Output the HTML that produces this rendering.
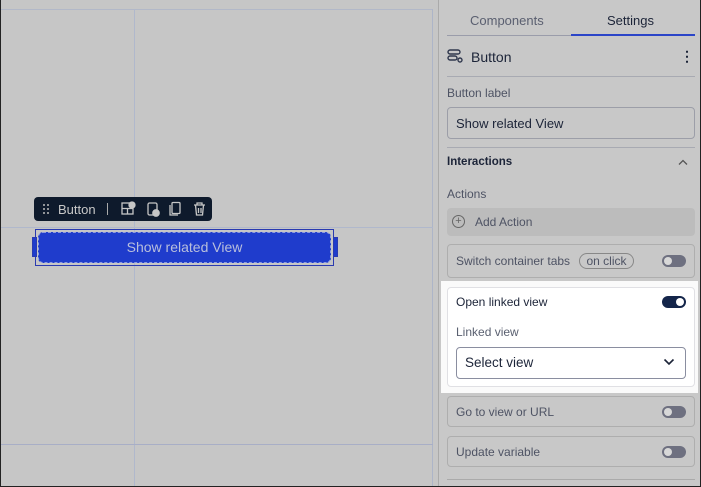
<!DOCTYPE html>
<html><head><style>
*{box-sizing:border-box;margin:0;padding:0}
body{width:701px;height:487px;overflow:hidden;background:#c6c6c6;font-family:"Liberation Sans",sans-serif;position:relative}
.abs{position:absolute}
.frame{left:0;top:0;width:701px;height:487px;border:1px solid #222;border-top:none;pointer-events:none}
.panel{left:438px;top:0;width:263px;height:487px;background:#c8c8c8;border-left:1px solid #aaa}
.t{position:absolute;color:#3a3f52;white-space:nowrap}
.tog{position:absolute;width:24px;height:12px;border-radius:6px;background:#6e7080}
.tog::after{content:"";position:absolute;left:2px;top:2px;width:8px;height:8px;border-radius:50%;background:#d8d8d8}
.box{position:absolute;left:447px;width:248px;border:1px solid #aeaeae;border-radius:4px}
</style></head><body>
<div class="abs" style="left:0;top:9px;width:433px;height:1px;background:#b2b8c8"></div>
<div class="abs" style="left:432px;top:9px;width:1px;height:478px;background:#adb5c8"></div>
<div class="abs" style="left:134px;top:9px;width:1px;height:478px;background:#b0b8cc"></div>
<div class="abs" style="left:0;top:227px;width:433px;height:1px;background:#b0b8cc"></div>
<div class="abs" style="left:0;top:444px;width:433px;height:1px;background:#a8aec6"></div>
<div class="abs" style="left:34px;top:197px;width:178px;height:24px;background:#0e1a2c;border-radius:4px"></div>
<svg class="abs" style="left:42px;top:203px" width="8" height="12" fill="#bbb"><circle cx="2" cy="2" r="1"/><circle cx="6" cy="2" r="1"/><circle cx="2" cy="6" r="1"/><circle cx="6" cy="6" r="1"/><circle cx="2" cy="10" r="1"/><circle cx="6" cy="10" r="1"/></svg>
<div class="t" style="left:58px;top:202px;color:#c8c8c8;font-size:13px">Button</div>
<div class="abs" style="left:107px;top:203px;width:1px;height:12px;background:#aaa"></div>
<svg class="abs" style="left:120px;top:201px" width="90" height="16" fill="none" stroke="#c6c6c6" stroke-width="1.3">
<rect x="2" y="2" width="11" height="11"/><path d="M2 7.5h11M7.5 7.5v5.5"/><circle cx="12" cy="4" r="3" fill="#c6c6c6"/>
<rect x="28" y="2" width="9" height="12" rx="1.5"/><circle cx="36" cy="12" r="3.2" fill="#c6c6c6"/>
<rect x="52" y="1.5" width="8" height="11" rx="1"/><path d="M50 4v10h8"/>
<path d="M74 4h11M77 4v-2h5v2M75.5 4l1 10h6l1-10M78.5 7v5M81 7v5"/>
</svg>
<div class="abs" style="left:35px;top:229px;width:299px;height:37px;border:1px solid #2a3ab0"></div>
<div class="abs" style="left:38px;top:232px;width:293px;height:31px;background:#1f3ccc;border-radius:5px;border:1px dashed #8c9ae0"></div>
<div class="t" style="left:38px;top:239px;width:293px;text-align:center;color:#b9bfdc;font-size:14px">Show related View</div>
<div class="abs" style="left:32px;top:237px;width:5px;height:20px;border:1px solid #2a3ab0;background:#1f3ccc"></div>
<div class="abs" style="left:333px;top:237px;width:5px;height:20px;border:1px solid #2a3ab0;background:#1f3ccc"></div>
<div class="abs panel"></div>
<div class="t" style="left:470px;top:13px;font-size:13px;color:#5a5f70">Components</div>
<div class="t" style="left:607px;top:13px;font-size:13px;color:#1c2438">Settings</div>
<div class="abs" style="left:447px;top:35px;width:124px;height:1px;background:#9a9caa"></div>
<div class="abs" style="left:571px;top:34px;width:124px;height:2px;background:#2b45c8"></div>
<svg class="abs" style="left:447px;top:49px" width="16" height="14" fill="none" stroke="#30384e" stroke-width="1.4"><rect x="1" y="1" width="12" height="4" rx="2"/><rect x="1" y="7" width="9" height="4" rx="2"/><circle cx="13" cy="11" r="2"/></svg>
<div class="t" style="left:471px;top:49px;font-size:14px;color:#1c2438">Button</div>
<div class="t" style="left:680px;top:48px;font-size:14px;color:#1c2438;font-weight:bold">⋮</div>
<div class="abs" style="left:447px;top:76px;width:248px;height:1px;background:#a8aab2"></div>
<div class="t" style="left:447px;top:86px;font-size:12px;color:#4e5364">Button label</div>
<div class="box" style="top:107px;height:32px;border-color:#9c9ea8"></div>
<div class="t" style="left:456px;top:116px;font-size:13px;color:#1c2438">Show related View</div>
<div class="abs" style="left:447px;top:147px;width:248px;height:1px;background:#a8aab2"></div>
<div class="t" style="left:447px;top:156px;font-size:11.5px;color:#1c2438;font-weight:bold">Interactions</div>
<svg class="abs" style="left:678px;top:159px" width="10" height="7" fill="none" stroke="#555" stroke-width="1.3"><path d="M1 5.5l4-4 4 4"/></svg>
<div class="t" style="left:447px;top:187px;font-size:12px;color:#4e5364">Actions</div>
<div class="abs" style="left:447px;top:208px;width:248px;height:28px;background:#bcbcbc;border-radius:4px"></div>
<div class="abs" style="left:452px;top:215px;width:13px;height:13px;border:1px solid #666;border-radius:50%;font-size:11px;line-height:11px;text-align:center;color:#666">+</div>
<div class="t" style="left:475px;top:215px;font-size:12px;color:#4e5364">Add Action</div>
<div class="box" style="top:244px;height:34px"></div>
<div class="t" style="left:456px;top:254px;font-size:12px;color:#4e5364">Switch container tabs</div>
<div class="abs" style="left:579px;top:253px;width:55px;height:16px;border:1px solid #888;border-radius:8px;font-size:12px;color:#4e5364;text-align:center;line-height:14px">on click</div>
<div class="tog" style="left:662px;top:255px"></div>
<div class="abs" style="left:441px;top:281px;width:257px;height:112px;background:#fafafa"></div>
<div class="abs" style="left:447px;top:287px;width:248px;height:100px;background:#fff;border:1px solid #e0e0e4;border-radius:4px"></div>
<div class="t" style="left:456px;top:295px;font-size:12px;color:#1c2438">Open linked view</div>
<div class="abs" style="left:662px;top:296px;width:24px;height:12px;border-radius:6px;background:#14254a"><div style="position:absolute;right:2px;top:2px;width:8px;height:8px;border-radius:50%;background:#fff"></div></div>
<div class="t" style="left:456px;top:325px;font-size:12px;color:#5a6070">Linked view</div>
<div class="abs" style="left:456px;top:347px;width:230px;height:32px;border:1px solid #8a8ea0;border-radius:4px"></div>
<div class="t" style="left:465px;top:355px;font-size:13.5px;color:#1c2438">Select view</div>
<svg class="abs" style="left:663px;top:358px" width="12" height="8" fill="none" stroke="#1c2438" stroke-width="1.6"><path d="M1.5 1.5l4.5 4.5 4.5-4.5"/></svg>
<div class="box" style="top:396px;height:31px"></div>
<div class="t" style="left:456px;top:405px;font-size:12px;color:#4e5364">Go to view or URL</div>
<div class="tog" style="left:662px;top:406px"></div>
<div class="box" style="top:436px;height:31px"></div>
<div class="t" style="left:456px;top:445px;font-size:12px;color:#4e5364">Update variable</div>
<div class="tog" style="left:662px;top:446px"></div>
<div class="abs" style="left:447px;top:479px;width:248px;height:1px;background:#aaa"></div>
<div class="abs frame"></div>
</body></html>
